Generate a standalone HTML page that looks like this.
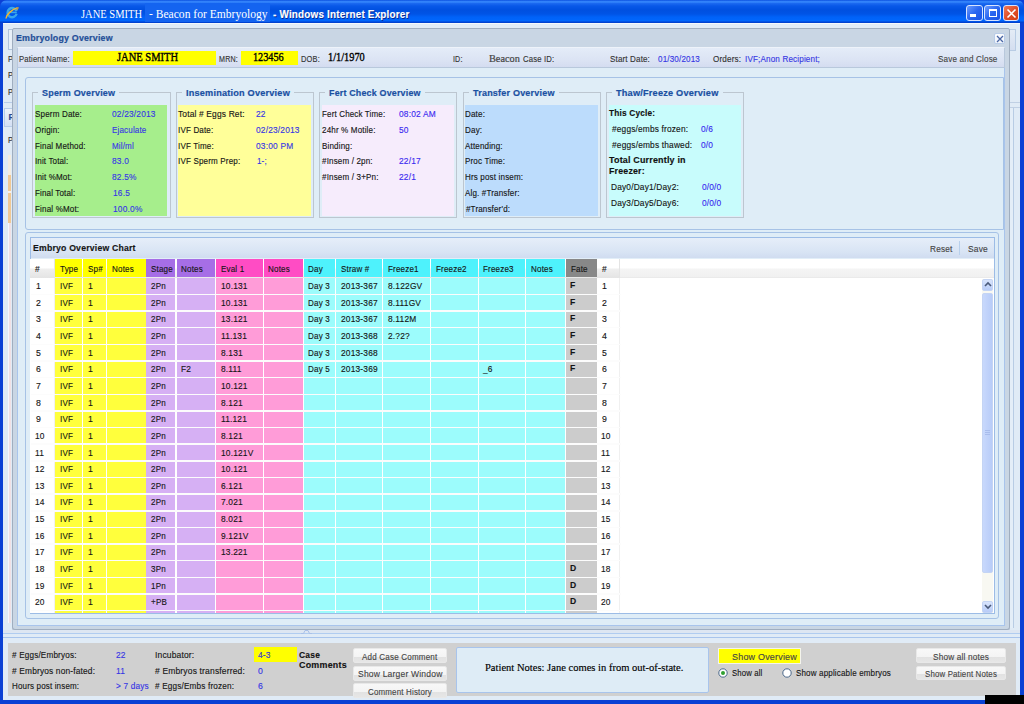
<!DOCTYPE html>
<html><head><meta charset="utf-8">
<style>
*{margin:0;padding:0;box-sizing:border-box}
html,body{width:1024px;height:704px;overflow:hidden;background:#0b3fd6;font-family:"Liberation Sans",sans-serif}
.a{position:absolute}
.t{position:absolute;white-space:nowrap;transform-origin:0 0;-webkit-text-stroke:0.14px currentColor}
</style></head><body>
<div class="a" style="left:0px;top:0px;width:1024px;height:23.5px;background:linear-gradient(#0a50e0 0,#3a8cff 1.8px,#1a68f0 3.5px,#0858e8 6px,#0050e0 10px,#0054e6 14px,#0062f8 17px,#0066fc 20.5px,#0044d4 22.3px,#0038c0 23.5px);border-radius:7px 7px 0 0"></div>
<div class="a" style="left:0px;top:23px;width:1024px;height:681px;background:#0a40d4"></div>
<div class="a" style="left:3px;top:23px;width:1017px;height:677px;background:#e0ebf6"></div>
<div class="a" style="left:3px;top:23px;width:1017px;height:1px;background:#f4f8fc"></div>
<div class="a" style="left:145px;top:3px;width:125px;height:19px;background:#1464f0"></div>
<svg class="a" style="left:4px;top:5px" width="16" height="15" viewBox="0 0 16 15"><path d="M12.6 8.8A4.6 4.6 0 1 1 12.5 6.2" fill="none" stroke="#38a6ec" stroke-width="2.4"/><path d="M5.3 7.4H12.8" stroke="#38a6ec" stroke-width="1.6"/><path d="M2 13.5C2.5 9 8 4.5 13.5 2.6" fill="none" stroke="#f2b630" stroke-width="1.5"/><path d="M13.5 2.6C15 2.3 13.5 4 12.8 5" fill="none" stroke="#e8a828" stroke-width="1.1"/></svg>
<div class="t" style="left:81.00px;top:8.45px;font:normal 12px/1 'Liberation Serif',serif;color:#fff;transform:scaleX(0.876);-webkit-text-stroke:0;">JANE SMITH</div>
<div class="t" style="left:149.00px;top:8.45px;font:normal 12px/1 'Liberation Serif',serif;color:#fff;transform:scaleX(0.964);-webkit-text-stroke:0;">- Beacon for Embryology</div>
<div class="t" style="left:273.00px;top:9.19px;font:bold 11px/1 'Liberation Sans',sans-serif;color:#fff;transform:scaleX(0.898);letter-spacing:0.225px;text-shadow:1px 1px 0 #0a2a90">- Windows Internet Explorer</div>
<div class="a" style="left:966.2px;top:5.3px;width:16.5px;height:15.8px;border:1px solid #d8e4ff;border-radius:3px;background:linear-gradient(135deg,#6c9cff,#2a66f0 50%,#1c54e4)"></div>
<div class="a" style="left:984.4px;top:5.3px;width:16.3px;height:15.8px;border:1px solid #d8e4ff;border-radius:3px;background:linear-gradient(135deg,#6c9cff,#2a66f0 50%,#1c54e4)"></div>
<div class="a" style="left:1003.3px;top:5.3px;width:15.8px;height:15.8px;border:1px solid #d8e4ff;border-radius:3px;background:linear-gradient(135deg,#f07a58,#e0502a 50%,#d43c10)"></div>
<div class="a" style="left:970px;top:14.3px;width:5.6px;height:2.3px;background:#fff"></div>
<div class="a" style="left:988.5px;top:9px;width:8.6px;height:8px;border:1px solid #fff;border-top-width:2.2px"></div>
<svg class="a" style="left:1006px;top:8px" width="11" height="11"><path d="M1.5 1.5L9.5 9.5M9.5 1.5L1.5 9.5" stroke="#fff" stroke-width="1.6"/></svg>
<div class="a" style="left:8px;top:28.5px;width:4px;height:21.5px;border:1px solid #b0c4dc;border-right:none;background:#e8f0f8"></div>
<div class="t" style="left:8.00px;top:54.55px;font:normal 8.8px/1 'Liberation Sans',sans-serif;color:#333;transform:scaleX(0.855);">P</div>
<div class="t" style="left:8.00px;top:71.05px;font:normal 8.8px/1 'Liberation Sans',sans-serif;color:#333;transform:scaleX(0.855);">P</div>
<div class="t" style="left:8.00px;top:87.55px;font:normal 8.8px/1 'Liberation Sans',sans-serif;color:#333;transform:scaleX(0.855);">P</div>
<div class="a" style="left:3.5px;top:102px;width:8px;height:1px;background:#b8cce8"></div>
<div class="a" style="left:3.5px;top:108px;width:8px;height:18.5px;border:1px solid #b8cce8;border-right:none;background:linear-gradient(#eef2fa,#d4e0f4)"></div>
<div class="t" style="left:8.50px;top:113.05px;font:bold 8.8px/1 'Liberation Sans',sans-serif;color:#2a4a90;transform:scaleX(1.000);">P</div>
<div class="t" style="left:8.00px;top:135.55px;font:normal 8.8px/1 'Liberation Sans',sans-serif;color:#333;transform:scaleX(0.855);">P</div>
<div class="a" style="left:8px;top:155px;width:3px;height:20px;background:#f4ece0"></div>
<div class="a" style="left:8px;top:175px;width:3px;height:16px;background:#f0c894"></div>
<div class="a" style="left:8px;top:191px;width:3px;height:2px;background:#f8f0e8"></div>
<div class="a" style="left:8px;top:193px;width:3px;height:30px;background:#f0c894"></div>
<div class="a" style="left:8px;top:223px;width:3px;height:400px;background:#f0e0e4"></div>
<div class="a" style="left:7.5px;top:223px;width:1px;height:400px;background:#f8f8fc"></div>
<div class="a" style="left:1010px;top:29px;width:5.5px;height:21.5px;border:1px solid #b8cce4;border-left:none;background:linear-gradient(#e4ecf6,#d4def0)"></div>
<div class="a" style="left:1009px;top:101.5px;width:11px;height:1px;background:#c0d0e4"></div>
<div class="a" style="left:1009px;top:106.5px;width:11px;height:1px;background:#c0d0e4"></div>
<div class="a" style="left:1010px;top:108px;width:4px;height:520px;border-right:1px solid #b8cce4;background:#e4eef8"></div>
<div class="a" style="left:11.5px;top:28px;width:998px;height:602px;background:#c9d6e4;border:1px solid #a0aec0;border-radius:2px 2px 3px 3px;box-shadow:0 1px 0 #b4c0d0"></div>
<div class="t" style="left:16.00px;top:32.84px;font:bold 9.4px/1 'Liberation Sans',sans-serif;color:#1f4f98;transform:scaleX(0.943);letter-spacing:0.217px;-webkit-text-stroke:0.2px currentColor">Embryology Overview</div>
<div class="a" style="left:993.5px;top:32.5px;width:11px;height:11px;background:linear-gradient(#fcfdff,#eef3fa);border:1px solid #b8cce8;border-radius:2px"></div>
<svg class="a" style="left:995.5px;top:34.5px" width="8" height="8"><path d="M1 1L7 7M7 1L1 7" stroke="#4a66a4" stroke-width="1.3"/></svg>
<div class="a" style="left:16.5px;top:47px;width:988px;height:21px;background:linear-gradient(#e4ecf8,#dce4f4 60%,#d4dcf0);border:1px solid #b8c8dc;border-top-color:#eef3fa"></div>
<div class="t" style="left:18.50px;top:54.20px;font:normal 9.8px/1 'Liberation Sans',sans-serif;color:#333;transform:scaleX(0.785);letter-spacing:0.199px;">Patient Name:</div>
<div class="a" style="left:73px;top:50.5px;width:143px;height:14.5px;background:#ffff00"></div>
<div class="t" style="left:117.00px;top:52.37px;font:normal 11.5px/1 'Liberation Serif',serif;color:#000;transform:scaleX(0.914);-webkit-text-stroke:0.35px #000">JANE SMITH</div>
<div class="t" style="left:219.00px;top:54.20px;font:normal 9.8px/1 'Liberation Sans',sans-serif;color:#333;transform:scaleX(0.728);letter-spacing:0.261px;">MRN:</div>
<div class="a" style="left:241px;top:50.5px;width:57px;height:14px;background:#ffff00"></div>
<div class="t" style="left:253.00px;top:51.87px;font:normal 11.5px/1 'Liberation Serif',serif;color:#000;transform:scaleX(0.891);-webkit-text-stroke:0.35px #000">123456</div>
<div class="t" style="left:300.50px;top:54.20px;font:normal 9.8px/1 'Liberation Sans',sans-serif;color:#333;transform:scaleX(0.761);letter-spacing:0.250px;">DOB:</div>
<div class="t" style="left:327.50px;top:51.87px;font:normal 11.5px/1 'Liberation Serif',serif;color:#000;transform:scaleX(0.899);-webkit-text-stroke:0.35px #000">1/1/1970</div>
<div class="t" style="left:452.50px;top:54.20px;font:normal 9.8px/1 'Liberation Sans',sans-serif;color:#333;transform:scaleX(0.728);letter-spacing:0.174px;">ID:</div>
<div class="t" style="left:489.40px;top:53.29px;font:normal 11px/1 'Liberation Serif',serif;color:#444;transform:scaleX(0.937);-webkit-text-stroke:0.2px #444">Beacon</div>
<div class="t" style="left:522.70px;top:54.20px;font:normal 9.8px/1 'Liberation Sans',sans-serif;color:#333;transform:scaleX(0.786);letter-spacing:0.199px;">Case ID:</div>
<div class="t" style="left:609.50px;top:54.20px;font:normal 9.8px/1 'Liberation Sans',sans-serif;color:#333;transform:scaleX(0.820);letter-spacing:0.177px;">Start Date:</div>
<div class="t" style="left:657.50px;top:54.20px;font:normal 9.8px/1 'Liberation Sans',sans-serif;color:#3636e4;transform:scaleX(0.822);letter-spacing:0.204px;">01/30/2013</div>
<div class="t" style="left:713.00px;top:54.20px;font:normal 9.8px/1 'Liberation Sans',sans-serif;color:#333;transform:scaleX(0.830);letter-spacing:0.194px;">Orders:</div>
<div class="t" style="left:744.50px;top:54.20px;font:normal 9.8px/1 'Liberation Sans',sans-serif;color:#3636e4;transform:scaleX(0.826);letter-spacing:0.191px;">IVF;Anon Recipient;</div>
<div class="t" style="left:937.50px;top:54.20px;font:normal 9.8px/1 'Liberation Sans',sans-serif;color:#444;transform:scaleX(0.826);letter-spacing:0.206px;">Save and Close</div>
<div class="a" style="left:16.5px;top:68px;width:988px;height:557.5px;background:#dfedf7;border:1px solid #a8c4ec;border-top:none"></div>
<div class="a" style="left:24.5px;top:77px;width:979.5px;height:153px;border:1px solid #a6c2e6;background:#dfedf7;border-radius:3px 0 0 3px"></div>
<div class="a" style="left:32px;top:92px;width:138.5px;height:126px;border:1px solid #bcc6d0"></div>
<div class="a" style="left:38px;top:86px;width:81.3px;height:12px;background:#dfedf7"></div>
<div class="t" style="left:42.00px;top:87.87px;font:bold 9.6px/1 'Liberation Sans',sans-serif;color:#1a50a2;transform:scaleX(0.935);letter-spacing:0.224px;-webkit-text-stroke:0.2px currentColor">Sperm Overview</div>
<div class="a" style="left:35px;top:105px;width:132px;height:110.5px;background:#a6ee8c"></div>
<div class="a" style="left:175.5px;top:92px;width:138.0px;height:126px;border:1px solid #bcc6d0"></div>
<div class="a" style="left:181.6px;top:86px;width:112px;height:12px;background:#dfedf7"></div>
<div class="t" style="left:185.60px;top:87.87px;font:bold 9.6px/1 'Liberation Sans',sans-serif;color:#1a50a2;transform:scaleX(0.955);letter-spacing:0.207px;-webkit-text-stroke:0.2px currentColor">Insemination Overview</div>
<div class="a" style="left:178px;top:105px;width:132.60000000000002px;height:110.5px;background:#ffff99"></div>
<div class="a" style="left:319px;top:92px;width:137.5px;height:126px;border:1px solid #bcc6d0"></div>
<div class="a" style="left:324.9px;top:86px;width:99.7px;height:12px;background:#dfedf7"></div>
<div class="t" style="left:328.90px;top:87.87px;font:bold 9.6px/1 'Liberation Sans',sans-serif;color:#1a50a2;transform:scaleX(0.927);letter-spacing:0.208px;-webkit-text-stroke:0.2px currentColor">Fert Check Overview</div>
<div class="a" style="left:321.7px;top:105px;width:132.3px;height:110.5px;background:#f6ecfc"></div>
<div class="a" style="left:462.5px;top:92px;width:138.5px;height:126px;border:1px solid #bcc6d0"></div>
<div class="a" style="left:469px;top:86px;width:89.7px;height:12px;background:#dfedf7"></div>
<div class="t" style="left:473.00px;top:87.87px;font:bold 9.6px/1 'Liberation Sans',sans-serif;color:#1a50a2;transform:scaleX(0.942);letter-spacing:0.204px;-webkit-text-stroke:0.2px currentColor">Transfer Overview</div>
<div class="a" style="left:464.8px;top:105px;width:132.90000000000003px;height:110.5px;background:#bcdcfc"></div>
<div class="a" style="left:605.7px;top:92px;width:137.89999999999998px;height:126px;border:1px solid #bcc6d0"></div>
<div class="a" style="left:612.2px;top:86px;width:110.5px;height:12px;background:#dfedf7"></div>
<div class="t" style="left:616.20px;top:87.87px;font:bold 9.6px/1 'Liberation Sans',sans-serif;color:#1a50a2;transform:scaleX(0.956);letter-spacing:0.215px;-webkit-text-stroke:0.2px currentColor">Thaw/Freeze Overview</div>
<div class="a" style="left:608.6px;top:105px;width:132.39999999999998px;height:110.5px;background:#c8fcfc"></div>
<div class="t" style="left:35.00px;top:109.10px;font:normal 9.8px/1 'Liberation Sans',sans-serif;color:#151515;transform:scaleX(0.821);letter-spacing:0.208px;">Sperm Date:</div>
<div class="t" style="left:111.80px;top:109.10px;font:normal 9.8px/1 'Liberation Sans',sans-serif;color:#3636e4;transform:scaleX(0.854);letter-spacing:0.204px;">02/23/2013</div>
<div class="t" style="left:35.00px;top:124.88px;font:normal 9.8px/1 'Liberation Sans',sans-serif;color:#151515;transform:scaleX(0.821);letter-spacing:0.172px;">Origin:</div>
<div class="t" style="left:111.80px;top:124.88px;font:normal 9.8px/1 'Liberation Sans',sans-serif;color:#3636e4;transform:scaleX(0.821);letter-spacing:0.187px;">Ejaculate</div>
<div class="t" style="left:35.00px;top:140.66px;font:normal 9.8px/1 'Liberation Sans',sans-serif;color:#151515;transform:scaleX(0.821);letter-spacing:0.190px;">Final Method:</div>
<div class="t" style="left:111.80px;top:140.66px;font:normal 9.8px/1 'Liberation Sans',sans-serif;color:#3636e4;transform:scaleX(0.821);letter-spacing:0.178px;">Mil/ml</div>
<div class="t" style="left:35.00px;top:156.44px;font:normal 9.8px/1 'Liberation Sans',sans-serif;color:#151515;transform:scaleX(0.821);letter-spacing:0.148px;">Init Total:</div>
<div class="t" style="left:111.80px;top:156.44px;font:normal 9.8px/1 'Liberation Sans',sans-serif;color:#3636e4;transform:scaleX(0.854);letter-spacing:0.199px;">83.0</div>
<div class="t" style="left:35.00px;top:172.22px;font:normal 9.8px/1 'Liberation Sans',sans-serif;color:#151515;transform:scaleX(0.821);letter-spacing:0.182px;">Init %Mot:</div>
<div class="t" style="left:111.80px;top:172.22px;font:normal 9.8px/1 'Liberation Sans',sans-serif;color:#3636e4;transform:scaleX(0.854);letter-spacing:0.232px;">82.5%</div>
<div class="t" style="left:35.00px;top:188.00px;font:normal 9.8px/1 'Liberation Sans',sans-serif;color:#151515;transform:scaleX(0.821);letter-spacing:0.164px;">Final Total:</div>
<div class="t" style="left:113.20px;top:188.00px;font:normal 9.8px/1 'Liberation Sans',sans-serif;color:#3636e4;transform:scaleX(0.854);letter-spacing:0.199px;">16.5</div>
<div class="t" style="left:35.00px;top:203.78px;font:normal 9.8px/1 'Liberation Sans',sans-serif;color:#151515;transform:scaleX(0.821);letter-spacing:0.196px;">Final %Mot:</div>
<div class="t" style="left:113.20px;top:203.78px;font:normal 9.8px/1 'Liberation Sans',sans-serif;color:#3636e4;transform:scaleX(0.854);letter-spacing:0.231px;">100.0%</div>
<div class="t" style="left:178.00px;top:109.10px;font:normal 9.8px/1 'Liberation Sans',sans-serif;color:#151515;transform:scaleX(0.858);letter-spacing:0.183px;">Total # Eggs Ret:</div>
<div class="t" style="left:256.00px;top:109.10px;font:normal 9.8px/1 'Liberation Sans',sans-serif;color:#3636e4;transform:scaleX(0.854);letter-spacing:0.227px;">22</div>
<div class="t" style="left:178.00px;top:124.88px;font:normal 9.8px/1 'Liberation Sans',sans-serif;color:#151515;transform:scaleX(0.821);letter-spacing:0.192px;">IVF Date:</div>
<div class="t" style="left:256.00px;top:124.88px;font:normal 9.8px/1 'Liberation Sans',sans-serif;color:#3636e4;transform:scaleX(0.854);letter-spacing:0.204px;">02/23/2013</div>
<div class="t" style="left:178.00px;top:140.66px;font:normal 9.8px/1 'Liberation Sans',sans-serif;color:#151515;transform:scaleX(0.821);letter-spacing:0.194px;">IVF Time:</div>
<div class="t" style="left:256.00px;top:140.66px;font:normal 9.8px/1 'Liberation Sans',sans-serif;color:#3636e4;transform:scaleX(0.854);letter-spacing:0.218px;">03:00 PM</div>
<div class="t" style="left:178.00px;top:156.44px;font:normal 9.8px/1 'Liberation Sans',sans-serif;color:#151515;transform:scaleX(0.821);letter-spacing:0.203px;">IVF Sperm Prep:</div>
<div class="t" style="left:256.70px;top:156.44px;font:normal 9.8px/1 'Liberation Sans',sans-serif;color:#3636e4;transform:scaleX(0.821);letter-spacing:0.159px;">1-;</div>
<div class="t" style="left:321.70px;top:109.10px;font:normal 9.8px/1 'Liberation Sans',sans-serif;color:#151515;transform:scaleX(0.815);letter-spacing:0.194px;">Fert Check Time:</div>
<div class="t" style="left:399.00px;top:109.10px;font:normal 9.8px/1 'Liberation Sans',sans-serif;color:#3a2af0;transform:scaleX(0.854);letter-spacing:0.216px;">08:02 AM</div>
<div class="t" style="left:321.70px;top:124.88px;font:normal 9.8px/1 'Liberation Sans',sans-serif;color:#151515;transform:scaleX(0.821);letter-spacing:0.186px;">24hr % Motile:</div>
<div class="t" style="left:399.00px;top:124.88px;font:normal 9.8px/1 'Liberation Sans',sans-serif;color:#3a2af0;transform:scaleX(0.854);letter-spacing:0.227px;">50</div>
<div class="t" style="left:321.70px;top:140.66px;font:normal 9.8px/1 'Liberation Sans',sans-serif;color:#151515;transform:scaleX(0.821);letter-spacing:0.184px;">Binding:</div>
<div class="t" style="left:321.70px;top:156.44px;font:normal 9.8px/1 'Liberation Sans',sans-serif;color:#151515;transform:scaleX(0.821);letter-spacing:0.190px;">#Insem / 2pn:</div>
<div class="t" style="left:399.00px;top:156.44px;font:normal 9.8px/1 'Liberation Sans',sans-serif;color:#3a2af0;transform:scaleX(0.854);letter-spacing:0.204px;">22/17</div>
<div class="t" style="left:321.70px;top:172.22px;font:normal 9.8px/1 'Liberation Sans',sans-serif;color:#151515;transform:scaleX(0.821);letter-spacing:0.197px;">#Insem / 3+Pn:</div>
<div class="t" style="left:399.00px;top:172.22px;font:normal 9.8px/1 'Liberation Sans',sans-serif;color:#3a2af0;transform:scaleX(0.854);letter-spacing:0.199px;">22/1</div>
<div class="t" style="left:464.80px;top:109.10px;font:normal 9.8px/1 'Liberation Sans',sans-serif;color:#151515;transform:scaleX(0.821);letter-spacing:0.195px;">Date:</div>
<div class="t" style="left:464.80px;top:124.88px;font:normal 9.8px/1 'Liberation Sans',sans-serif;color:#151515;transform:scaleX(0.821);letter-spacing:0.210px;">Day:</div>
<div class="t" style="left:464.80px;top:140.66px;font:normal 9.8px/1 'Liberation Sans',sans-serif;color:#151515;transform:scaleX(0.821);letter-spacing:0.184px;">Attending:</div>
<div class="t" style="left:464.80px;top:156.44px;font:normal 9.8px/1 'Liberation Sans',sans-serif;color:#151515;transform:scaleX(0.821);letter-spacing:0.195px;">Proc Time:</div>
<div class="t" style="left:464.80px;top:172.22px;font:normal 9.8px/1 'Liberation Sans',sans-serif;color:#151515;transform:scaleX(0.821);letter-spacing:0.189px;">Hrs post insem:</div>
<div class="t" style="left:464.80px;top:188.00px;font:normal 9.8px/1 'Liberation Sans',sans-serif;color:#151515;transform:scaleX(0.821);letter-spacing:0.178px;">Alg. #Transfer:</div>
<div class="t" style="left:466.00px;top:203.78px;font:normal 9.8px/1 'Liberation Sans',sans-serif;color:#151515;transform:scaleX(0.821);letter-spacing:0.179px;">#Transfer'd:</div>
<div class="t" style="left:609.20px;top:108.81px;font:bold 9.2px/1 'Liberation Sans',sans-serif;color:#111;transform:scaleX(0.904);letter-spacing:0.186px;">This Cycle:</div>
<div class="t" style="left:611.50px;top:124.20px;font:normal 9.8px/1 'Liberation Sans',sans-serif;color:#151515;transform:scaleX(0.850);letter-spacing:0.199px;">#eggs/embs frozen:</div>
<div class="t" style="left:701.40px;top:124.20px;font:normal 9.8px/1 'Liberation Sans',sans-serif;color:#3a2af0;transform:scaleX(0.854);letter-spacing:0.189px;">0/6</div>
<div class="t" style="left:611.50px;top:139.90px;font:normal 9.8px/1 'Liberation Sans',sans-serif;color:#151515;transform:scaleX(0.852);letter-spacing:0.209px;">#eggs/embs thawed:</div>
<div class="t" style="left:701.40px;top:139.90px;font:normal 9.8px/1 'Liberation Sans',sans-serif;color:#3a2af0;transform:scaleX(0.854);letter-spacing:0.189px;">0/0</div>
<div class="t" style="left:609.20px;top:156.41px;font:bold 9.2px/1 'Liberation Sans',sans-serif;color:#111;transform:scaleX(0.977);letter-spacing:0.175px;">Total Currently in</div>
<div class="t" style="left:609.20px;top:166.81px;font:bold 9.2px/1 'Liberation Sans',sans-serif;color:#111;transform:scaleX(0.963);letter-spacing:0.186px;">Freezer:</div>
<div class="t" style="left:611.00px;top:182.20px;font:normal 9.8px/1 'Liberation Sans',sans-serif;color:#151515;transform:scaleX(0.850);letter-spacing:0.213px;">Day0/Day1/Day2:</div>
<div class="t" style="left:701.50px;top:182.20px;font:normal 9.8px/1 'Liberation Sans',sans-serif;color:#3a2af0;transform:scaleX(0.854);letter-spacing:0.182px;">0/0/0</div>
<div class="t" style="left:611.00px;top:197.70px;font:normal 9.8px/1 'Liberation Sans',sans-serif;color:#151515;transform:scaleX(0.850);letter-spacing:0.213px;">Day3/Day5/Day6:</div>
<div class="t" style="left:701.50px;top:197.70px;font:normal 9.8px/1 'Liberation Sans',sans-serif;color:#3a2af0;transform:scaleX(0.854);letter-spacing:0.182px;">0/0/0</div>
<div class="a" style="left:25px;top:231.5px;width:974px;height:387px;border:1px solid #a6c2e6;border-radius:3px"></div>
<div class="a" style="left:29.5px;top:236.5px;width:965px;height:377.5px;border:1px solid #9cbce6;background:#e2eef8"></div>
<div class="a" style="left:30.5px;top:237.5px;width:963px;height:20px;background:linear-gradient(#e6eef9,#d8e4f4 70%,#d0dcf0)"></div>
<div class="t" style="left:33.40px;top:244.21px;font:bold 9.2px/1 'Liberation Sans',sans-serif;color:#151515;transform:scaleX(0.946);letter-spacing:0.207px;">Embryo Overview Chart</div>
<div class="t" style="left:929.50px;top:243.70px;font:normal 9.8px/1 'Liberation Sans',sans-serif;color:#444;transform:scaleX(0.844);letter-spacing:0.213px;">Reset</div>
<div class="a" style="left:959px;top:241px;width:1px;height:14px;background:#b8d0ec"></div>
<div class="t" style="left:967.50px;top:243.70px;font:normal 9.8px/1 'Liberation Sans',sans-serif;color:#444;transform:scaleX(0.860);letter-spacing:0.233px;">Save</div>
<div class="a" style="left:30.5px;top:258.5px;width:963.5px;height:354.5px;background:#fff"></div>
<div class="a" style="left:30.5px;top:258.5px;width:963.5px;height:19px;background:linear-gradient(#fff 0,#fff 45%,#f4f4f4 55%,#f0f0f0 95%,#e4e4e4)"></div>
<div class="a" style="left:30.25px;top:258.5px;width:24.25px;height:19px;border-right:1px solid #e4e4e4;background:linear-gradient(#fff 0,#fff 45%,#eee 55%,#e4e4e4)"></div>
<div class="t" style="left:34.75px;top:263.50px;font:normal 9.8px/1 'Liberation Sans',sans-serif;color:#151515;transform:scaleX(0.855);">#</div>
<div class="a" style="left:55.0px;top:259.4px;width:27.0px;height:17.9px;background:#ffff00"></div>
<div class="t" style="left:59.75px;top:263.50px;font:normal 9.8px/1 'Liberation Sans',sans-serif;color:#151515;transform:scaleX(0.821);letter-spacing:0.221px;">Type</div>
<div class="a" style="left:82.75px;top:259.4px;width:23.0px;height:17.9px;background:#ffff00"></div>
<div class="t" style="left:87.50px;top:263.50px;font:normal 9.8px/1 'Liberation Sans',sans-serif;color:#151515;transform:scaleX(0.821);letter-spacing:0.242px;">Sp#</div>
<div class="a" style="left:106.75px;top:259.4px;width:39.0px;height:17.9px;background:#ffff00"></div>
<div class="t" style="left:111.50px;top:263.50px;font:normal 9.8px/1 'Liberation Sans',sans-serif;color:#151515;transform:scaleX(0.821);letter-spacing:0.213px;">Notes</div>
<div class="a" style="left:146.25px;top:259.4px;width:29.0px;height:17.9px;background:#a66ee6"></div>
<div class="t" style="left:151.00px;top:263.50px;font:normal 9.8px/1 'Liberation Sans',sans-serif;color:#151515;transform:scaleX(0.821);letter-spacing:0.213px;">Stage</div>
<div class="a" style="left:176.5px;top:259.4px;width:38.75px;height:17.9px;background:#a66ee6"></div>
<div class="t" style="left:181.25px;top:263.50px;font:normal 9.8px/1 'Liberation Sans',sans-serif;color:#151515;transform:scaleX(0.821);letter-spacing:0.213px;">Notes</div>
<div class="a" style="left:216.0px;top:259.4px;width:46.75px;height:17.9px;background:#ff4cc4"></div>
<div class="t" style="left:220.75px;top:263.50px;font:normal 9.8px/1 'Liberation Sans',sans-serif;color:#151515;transform:scaleX(0.821);letter-spacing:0.189px;">Eval 1</div>
<div class="a" style="left:263.5px;top:259.4px;width:39.25px;height:17.9px;background:#ff4cc4"></div>
<div class="t" style="left:268.25px;top:263.50px;font:normal 9.8px/1 'Liberation Sans',sans-serif;color:#151515;transform:scaleX(0.821);letter-spacing:0.213px;">Notes</div>
<div class="a" style="left:303.5px;top:259.4px;width:31.25px;height:17.9px;background:#4ef2fc"></div>
<div class="t" style="left:308.25px;top:263.50px;font:normal 9.8px/1 'Liberation Sans',sans-serif;color:#151515;transform:scaleX(0.821);letter-spacing:0.242px;">Day</div>
<div class="a" style="left:336.0px;top:259.4px;width:46.25px;height:17.9px;background:#4ef2fc"></div>
<div class="t" style="left:340.75px;top:263.50px;font:normal 9.8px/1 'Liberation Sans',sans-serif;color:#151515;transform:scaleX(0.821);letter-spacing:0.198px;">Straw #</div>
<div class="a" style="left:383.25px;top:259.4px;width:46.5px;height:17.9px;background:#4ef2fc"></div>
<div class="t" style="left:388.00px;top:263.50px;font:normal 9.8px/1 'Liberation Sans',sans-serif;color:#151515;transform:scaleX(0.821);letter-spacing:0.214px;">Freeze1</div>
<div class="a" style="left:431.0px;top:259.4px;width:46.75px;height:17.9px;background:#4ef2fc"></div>
<div class="t" style="left:435.75px;top:263.50px;font:normal 9.8px/1 'Liberation Sans',sans-serif;color:#151515;transform:scaleX(0.821);letter-spacing:0.214px;">Freeze2</div>
<div class="a" style="left:478.5px;top:259.4px;width:46.75px;height:17.9px;background:#4ef2fc"></div>
<div class="t" style="left:483.25px;top:263.50px;font:normal 9.8px/1 'Liberation Sans',sans-serif;color:#151515;transform:scaleX(0.821);letter-spacing:0.214px;">Freeze3</div>
<div class="a" style="left:526.0px;top:259.4px;width:38.75px;height:17.9px;background:#4ef2fc"></div>
<div class="t" style="left:530.75px;top:263.50px;font:normal 9.8px/1 'Liberation Sans',sans-serif;color:#151515;transform:scaleX(0.821);letter-spacing:0.213px;">Notes</div>
<div class="a" style="left:566.0px;top:259.4px;width:30.5px;height:17.9px;background:#888888"></div>
<div class="t" style="left:570.75px;top:263.50px;font:normal 9.8px/1 'Liberation Sans',sans-serif;color:#151515;transform:scaleX(0.821);letter-spacing:0.204px;">Fate</div>
<div class="a" style="left:597px;top:258.5px;width:23px;height:19px;border-right:1px solid #e4e4e4;background:linear-gradient(#fff 0,#fff 45%,#eee 55%,#e4e4e4)"></div>
<div class="t" style="left:601.50px;top:263.50px;font:normal 9.8px/1 'Liberation Sans',sans-serif;color:#151515;transform:scaleX(0.855);">#</div>
<div class="a" style="left:30.25px;top:278.25px;width:24.25px;height:334.5px;background:#fff;border-right:1px solid #f0f0f0"></div>
<div class="a" style="left:55.0px;top:278.25px;width:27.0px;height:334.5px;background:#ffff3c"></div>
<div class="a" style="left:82.75px;top:278.25px;width:23.0px;height:334.5px;background:#ffff3c"></div>
<div class="a" style="left:106.75px;top:278.25px;width:39.0px;height:334.5px;background:#ffff3c"></div>
<div class="a" style="left:146.25px;top:278.25px;width:29.0px;height:334.5px;background:#d6b0f4"></div>
<div class="a" style="left:176.5px;top:278.25px;width:38.75px;height:334.5px;background:#d6b0f4"></div>
<div class="a" style="left:216.0px;top:278.25px;width:46.75px;height:334.5px;background:#ff9cd8"></div>
<div class="a" style="left:263.5px;top:278.25px;width:39.25px;height:334.5px;background:#ff9cd8"></div>
<div class="a" style="left:303.5px;top:278.25px;width:31.25px;height:334.5px;background:#9cfcfc"></div>
<div class="a" style="left:336.0px;top:278.25px;width:46.25px;height:334.5px;background:#9cfcfc"></div>
<div class="a" style="left:383.25px;top:278.25px;width:46.5px;height:334.5px;background:#9cfcfc"></div>
<div class="a" style="left:431.0px;top:278.25px;width:46.75px;height:334.5px;background:#9cfcfc"></div>
<div class="a" style="left:478.5px;top:278.25px;width:46.75px;height:334.5px;background:#9cfcfc"></div>
<div class="a" style="left:526.0px;top:278.25px;width:38.75px;height:334.5px;background:#9cfcfc"></div>
<div class="a" style="left:566.0px;top:278.25px;width:30.5px;height:334.5px;background:#cccccc"></div>
<div class="a" style="left:597px;top:278.25px;width:23px;height:334.5px;background:#fff;border-right:1px solid #f0f0f0"></div>
<div class="a" style="left:30.5px;top:293.645px;width:590px;height:1.5px;background:#fcfcfc"></div>
<div class="a" style="left:30.5px;top:310.29px;width:590px;height:1.5px;background:#fcfcfc"></div>
<div class="a" style="left:30.5px;top:326.935px;width:590px;height:1.5px;background:#fcfcfc"></div>
<div class="a" style="left:30.5px;top:343.58px;width:590px;height:1.5px;background:#fcfcfc"></div>
<div class="a" style="left:30.5px;top:360.225px;width:590px;height:1.5px;background:#fcfcfc"></div>
<div class="a" style="left:30.5px;top:376.87px;width:590px;height:1.5px;background:#fcfcfc"></div>
<div class="a" style="left:30.5px;top:393.515px;width:590px;height:1.5px;background:#fcfcfc"></div>
<div class="a" style="left:30.5px;top:410.15999999999997px;width:590px;height:1.5px;background:#fcfcfc"></div>
<div class="a" style="left:30.5px;top:426.805px;width:590px;height:1.5px;background:#fcfcfc"></div>
<div class="a" style="left:30.5px;top:443.45px;width:590px;height:1.5px;background:#fcfcfc"></div>
<div class="a" style="left:30.5px;top:460.095px;width:590px;height:1.5px;background:#fcfcfc"></div>
<div class="a" style="left:30.5px;top:476.74px;width:590px;height:1.5px;background:#fcfcfc"></div>
<div class="a" style="left:30.5px;top:493.385px;width:590px;height:1.5px;background:#fcfcfc"></div>
<div class="a" style="left:30.5px;top:510.03px;width:590px;height:1.5px;background:#fcfcfc"></div>
<div class="a" style="left:30.5px;top:526.675px;width:590px;height:1.5px;background:#fcfcfc"></div>
<div class="a" style="left:30.5px;top:543.3199999999999px;width:590px;height:1.5px;background:#fcfcfc"></div>
<div class="a" style="left:30.5px;top:559.9649999999999px;width:590px;height:1.5px;background:#fcfcfc"></div>
<div class="a" style="left:30.5px;top:576.61px;width:590px;height:1.5px;background:#fcfcfc"></div>
<div class="a" style="left:30.5px;top:593.255px;width:590px;height:1.5px;background:#fcfcfc"></div>
<div class="a" style="left:30.5px;top:609.9px;width:590px;height:1.5px;background:#fcfcfc"></div>
<div class="t" style="left:36.00px;top:281.10px;font:normal 9.8px/1 'Liberation Sans',sans-serif;color:#151515;transform:scaleX(0.890);">1</div>
<div class="t" style="left:602.00px;top:281.10px;font:normal 9.8px/1 'Liberation Sans',sans-serif;color:#151515;transform:scaleX(0.890);">1</div>
<div class="t" style="left:59.75px;top:281.10px;font:normal 9.8px/1 'Liberation Sans',sans-serif;color:#151515;transform:scaleX(0.821);letter-spacing:0.212px;">IVF</div>
<div class="t" style="left:87.50px;top:281.10px;font:normal 9.8px/1 'Liberation Sans',sans-serif;color:#151515;transform:scaleX(0.890);">1</div>
<div class="t" style="left:151.00px;top:281.10px;font:normal 9.8px/1 'Liberation Sans',sans-serif;color:#151515;transform:scaleX(0.821);letter-spacing:0.242px;">2Pn</div>
<div class="t" style="left:220.75px;top:281.10px;font:normal 9.8px/1 'Liberation Sans',sans-serif;color:#151515;transform:scaleX(0.854);letter-spacing:0.208px;">10.131</div>
<div class="t" style="left:308.25px;top:281.10px;font:normal 9.8px/1 'Liberation Sans',sans-serif;color:#151515;transform:scaleX(0.821);letter-spacing:0.213px;">Day 3</div>
<div class="t" style="left:340.75px;top:281.10px;font:normal 9.8px/1 'Liberation Sans',sans-serif;color:#151515;transform:scaleX(0.854);letter-spacing:0.216px;">2013-367</div>
<div class="t" style="left:388.00px;top:281.10px;font:normal 9.8px/1 'Liberation Sans',sans-serif;color:#151515;transform:scaleX(0.854);letter-spacing:0.230px;">8.122GV</div>
<div class="t" style="left:570.25px;top:280.98px;font:bold 9px/1 'Liberation Sans',sans-serif;color:#151515;transform:scaleX(0.950);">F</div>
<div class="t" style="left:36.00px;top:297.75px;font:normal 9.8px/1 'Liberation Sans',sans-serif;color:#151515;transform:scaleX(0.890);">2</div>
<div class="t" style="left:602.00px;top:297.75px;font:normal 9.8px/1 'Liberation Sans',sans-serif;color:#151515;transform:scaleX(0.890);">2</div>
<div class="t" style="left:59.75px;top:297.75px;font:normal 9.8px/1 'Liberation Sans',sans-serif;color:#151515;transform:scaleX(0.821);letter-spacing:0.212px;">IVF</div>
<div class="t" style="left:87.50px;top:297.75px;font:normal 9.8px/1 'Liberation Sans',sans-serif;color:#151515;transform:scaleX(0.890);">1</div>
<div class="t" style="left:151.00px;top:297.75px;font:normal 9.8px/1 'Liberation Sans',sans-serif;color:#151515;transform:scaleX(0.821);letter-spacing:0.242px;">2Pn</div>
<div class="t" style="left:220.75px;top:297.75px;font:normal 9.8px/1 'Liberation Sans',sans-serif;color:#151515;transform:scaleX(0.854);letter-spacing:0.208px;">10.131</div>
<div class="t" style="left:308.25px;top:297.75px;font:normal 9.8px/1 'Liberation Sans',sans-serif;color:#151515;transform:scaleX(0.821);letter-spacing:0.213px;">Day 3</div>
<div class="t" style="left:340.75px;top:297.75px;font:normal 9.8px/1 'Liberation Sans',sans-serif;color:#151515;transform:scaleX(0.854);letter-spacing:0.216px;">2013-367</div>
<div class="t" style="left:388.00px;top:297.75px;font:normal 9.8px/1 'Liberation Sans',sans-serif;color:#151515;transform:scaleX(0.854);letter-spacing:0.222px;">8.111GV</div>
<div class="t" style="left:570.25px;top:297.63px;font:bold 9px/1 'Liberation Sans',sans-serif;color:#151515;transform:scaleX(0.950);">F</div>
<div class="t" style="left:36.00px;top:314.39px;font:normal 9.8px/1 'Liberation Sans',sans-serif;color:#151515;transform:scaleX(0.890);">3</div>
<div class="t" style="left:602.00px;top:314.39px;font:normal 9.8px/1 'Liberation Sans',sans-serif;color:#151515;transform:scaleX(0.890);">3</div>
<div class="t" style="left:59.75px;top:314.39px;font:normal 9.8px/1 'Liberation Sans',sans-serif;color:#151515;transform:scaleX(0.821);letter-spacing:0.212px;">IVF</div>
<div class="t" style="left:87.50px;top:314.39px;font:normal 9.8px/1 'Liberation Sans',sans-serif;color:#151515;transform:scaleX(0.890);">1</div>
<div class="t" style="left:151.00px;top:314.39px;font:normal 9.8px/1 'Liberation Sans',sans-serif;color:#151515;transform:scaleX(0.821);letter-spacing:0.242px;">2Pn</div>
<div class="t" style="left:220.75px;top:314.39px;font:normal 9.8px/1 'Liberation Sans',sans-serif;color:#151515;transform:scaleX(0.854);letter-spacing:0.208px;">13.121</div>
<div class="t" style="left:308.25px;top:314.39px;font:normal 9.8px/1 'Liberation Sans',sans-serif;color:#151515;transform:scaleX(0.821);letter-spacing:0.213px;">Day 3</div>
<div class="t" style="left:340.75px;top:314.39px;font:normal 9.8px/1 'Liberation Sans',sans-serif;color:#151515;transform:scaleX(0.854);letter-spacing:0.216px;">2013-367</div>
<div class="t" style="left:388.00px;top:314.39px;font:normal 9.8px/1 'Liberation Sans',sans-serif;color:#151515;transform:scaleX(0.854);letter-spacing:0.222px;">8.112M</div>
<div class="t" style="left:570.25px;top:314.27px;font:bold 9px/1 'Liberation Sans',sans-serif;color:#151515;transform:scaleX(0.950);">F</div>
<div class="t" style="left:36.00px;top:331.04px;font:normal 9.8px/1 'Liberation Sans',sans-serif;color:#151515;transform:scaleX(0.890);">4</div>
<div class="t" style="left:602.00px;top:331.04px;font:normal 9.8px/1 'Liberation Sans',sans-serif;color:#151515;transform:scaleX(0.890);">4</div>
<div class="t" style="left:59.75px;top:331.04px;font:normal 9.8px/1 'Liberation Sans',sans-serif;color:#151515;transform:scaleX(0.821);letter-spacing:0.212px;">IVF</div>
<div class="t" style="left:87.50px;top:331.04px;font:normal 9.8px/1 'Liberation Sans',sans-serif;color:#151515;transform:scaleX(0.890);">1</div>
<div class="t" style="left:151.00px;top:331.04px;font:normal 9.8px/1 'Liberation Sans',sans-serif;color:#151515;transform:scaleX(0.821);letter-spacing:0.242px;">2Pn</div>
<div class="t" style="left:220.75px;top:331.04px;font:normal 9.8px/1 'Liberation Sans',sans-serif;color:#151515;transform:scaleX(0.854);letter-spacing:0.203px;">11.131</div>
<div class="t" style="left:308.25px;top:331.04px;font:normal 9.8px/1 'Liberation Sans',sans-serif;color:#151515;transform:scaleX(0.821);letter-spacing:0.213px;">Day 3</div>
<div class="t" style="left:340.75px;top:331.04px;font:normal 9.8px/1 'Liberation Sans',sans-serif;color:#151515;transform:scaleX(0.854);letter-spacing:0.216px;">2013-368</div>
<div class="t" style="left:388.00px;top:331.04px;font:normal 9.8px/1 'Liberation Sans',sans-serif;color:#151515;transform:scaleX(0.854);letter-spacing:0.204px;">2.?2?</div>
<div class="t" style="left:570.25px;top:330.92px;font:bold 9px/1 'Liberation Sans',sans-serif;color:#151515;transform:scaleX(0.950);">F</div>
<div class="t" style="left:36.00px;top:347.68px;font:normal 9.8px/1 'Liberation Sans',sans-serif;color:#151515;transform:scaleX(0.890);">5</div>
<div class="t" style="left:602.00px;top:347.68px;font:normal 9.8px/1 'Liberation Sans',sans-serif;color:#151515;transform:scaleX(0.890);">5</div>
<div class="t" style="left:59.75px;top:347.68px;font:normal 9.8px/1 'Liberation Sans',sans-serif;color:#151515;transform:scaleX(0.821);letter-spacing:0.212px;">IVF</div>
<div class="t" style="left:87.50px;top:347.68px;font:normal 9.8px/1 'Liberation Sans',sans-serif;color:#151515;transform:scaleX(0.890);">1</div>
<div class="t" style="left:151.00px;top:347.68px;font:normal 9.8px/1 'Liberation Sans',sans-serif;color:#151515;transform:scaleX(0.821);letter-spacing:0.242px;">2Pn</div>
<div class="t" style="left:220.75px;top:347.68px;font:normal 9.8px/1 'Liberation Sans',sans-serif;color:#151515;transform:scaleX(0.854);letter-spacing:0.204px;">8.131</div>
<div class="t" style="left:308.25px;top:347.68px;font:normal 9.8px/1 'Liberation Sans',sans-serif;color:#151515;transform:scaleX(0.821);letter-spacing:0.213px;">Day 3</div>
<div class="t" style="left:340.75px;top:347.68px;font:normal 9.8px/1 'Liberation Sans',sans-serif;color:#151515;transform:scaleX(0.854);letter-spacing:0.216px;">2013-368</div>
<div class="t" style="left:570.25px;top:347.56px;font:bold 9px/1 'Liberation Sans',sans-serif;color:#151515;transform:scaleX(0.950);">F</div>
<div class="t" style="left:36.00px;top:364.33px;font:normal 9.8px/1 'Liberation Sans',sans-serif;color:#151515;transform:scaleX(0.890);">6</div>
<div class="t" style="left:602.00px;top:364.33px;font:normal 9.8px/1 'Liberation Sans',sans-serif;color:#151515;transform:scaleX(0.890);">6</div>
<div class="t" style="left:59.75px;top:364.33px;font:normal 9.8px/1 'Liberation Sans',sans-serif;color:#151515;transform:scaleX(0.821);letter-spacing:0.212px;">IVF</div>
<div class="t" style="left:87.50px;top:364.33px;font:normal 9.8px/1 'Liberation Sans',sans-serif;color:#151515;transform:scaleX(0.890);">1</div>
<div class="t" style="left:151.00px;top:364.33px;font:normal 9.8px/1 'Liberation Sans',sans-serif;color:#151515;transform:scaleX(0.821);letter-spacing:0.242px;">2Pn</div>
<div class="t" style="left:181.25px;top:364.33px;font:normal 9.8px/1 'Liberation Sans',sans-serif;color:#151515;transform:scaleX(0.854);letter-spacing:0.238px;">F2</div>
<div class="t" style="left:220.75px;top:364.33px;font:normal 9.8px/1 'Liberation Sans',sans-serif;color:#151515;transform:scaleX(0.854);letter-spacing:0.192px;">8.111</div>
<div class="t" style="left:308.25px;top:364.33px;font:normal 9.8px/1 'Liberation Sans',sans-serif;color:#151515;transform:scaleX(0.821);letter-spacing:0.213px;">Day 5</div>
<div class="t" style="left:340.75px;top:364.33px;font:normal 9.8px/1 'Liberation Sans',sans-serif;color:#151515;transform:scaleX(0.854);letter-spacing:0.216px;">2013-369</div>
<div class="t" style="left:483.25px;top:364.33px;font:normal 9.8px/1 'Liberation Sans',sans-serif;color:#151515;transform:scaleX(0.854);letter-spacing:0.227px;">_6</div>
<div class="t" style="left:570.25px;top:364.21px;font:bold 9px/1 'Liberation Sans',sans-serif;color:#151515;transform:scaleX(0.950);">F</div>
<div class="t" style="left:36.00px;top:380.97px;font:normal 9.8px/1 'Liberation Sans',sans-serif;color:#151515;transform:scaleX(0.890);">7</div>
<div class="t" style="left:602.00px;top:380.97px;font:normal 9.8px/1 'Liberation Sans',sans-serif;color:#151515;transform:scaleX(0.890);">7</div>
<div class="t" style="left:59.75px;top:380.97px;font:normal 9.8px/1 'Liberation Sans',sans-serif;color:#151515;transform:scaleX(0.821);letter-spacing:0.212px;">IVF</div>
<div class="t" style="left:87.50px;top:380.97px;font:normal 9.8px/1 'Liberation Sans',sans-serif;color:#151515;transform:scaleX(0.890);">1</div>
<div class="t" style="left:151.00px;top:380.97px;font:normal 9.8px/1 'Liberation Sans',sans-serif;color:#151515;transform:scaleX(0.821);letter-spacing:0.242px;">2Pn</div>
<div class="t" style="left:220.75px;top:380.97px;font:normal 9.8px/1 'Liberation Sans',sans-serif;color:#151515;transform:scaleX(0.854);letter-spacing:0.208px;">10.121</div>
<div class="t" style="left:36.00px;top:397.62px;font:normal 9.8px/1 'Liberation Sans',sans-serif;color:#151515;transform:scaleX(0.890);">8</div>
<div class="t" style="left:602.00px;top:397.62px;font:normal 9.8px/1 'Liberation Sans',sans-serif;color:#151515;transform:scaleX(0.890);">8</div>
<div class="t" style="left:59.75px;top:397.62px;font:normal 9.8px/1 'Liberation Sans',sans-serif;color:#151515;transform:scaleX(0.821);letter-spacing:0.212px;">IVF</div>
<div class="t" style="left:87.50px;top:397.62px;font:normal 9.8px/1 'Liberation Sans',sans-serif;color:#151515;transform:scaleX(0.890);">1</div>
<div class="t" style="left:151.00px;top:397.62px;font:normal 9.8px/1 'Liberation Sans',sans-serif;color:#151515;transform:scaleX(0.821);letter-spacing:0.242px;">2Pn</div>
<div class="t" style="left:220.75px;top:397.62px;font:normal 9.8px/1 'Liberation Sans',sans-serif;color:#151515;transform:scaleX(0.854);letter-spacing:0.204px;">8.121</div>
<div class="t" style="left:36.00px;top:414.26px;font:normal 9.8px/1 'Liberation Sans',sans-serif;color:#151515;transform:scaleX(0.890);">9</div>
<div class="t" style="left:602.00px;top:414.26px;font:normal 9.8px/1 'Liberation Sans',sans-serif;color:#151515;transform:scaleX(0.890);">9</div>
<div class="t" style="left:59.75px;top:414.26px;font:normal 9.8px/1 'Liberation Sans',sans-serif;color:#151515;transform:scaleX(0.821);letter-spacing:0.212px;">IVF</div>
<div class="t" style="left:87.50px;top:414.26px;font:normal 9.8px/1 'Liberation Sans',sans-serif;color:#151515;transform:scaleX(0.890);">1</div>
<div class="t" style="left:151.00px;top:414.26px;font:normal 9.8px/1 'Liberation Sans',sans-serif;color:#151515;transform:scaleX(0.821);letter-spacing:0.242px;">2Pn</div>
<div class="t" style="left:220.75px;top:414.26px;font:normal 9.8px/1 'Liberation Sans',sans-serif;color:#151515;transform:scaleX(0.854);letter-spacing:0.203px;">11.121</div>
<div class="t" style="left:34.50px;top:430.91px;font:normal 9.8px/1 'Liberation Sans',sans-serif;color:#151515;transform:scaleX(0.854);letter-spacing:0.227px;">10</div>
<div class="t" style="left:601.00px;top:430.91px;font:normal 9.8px/1 'Liberation Sans',sans-serif;color:#151515;transform:scaleX(0.854);letter-spacing:0.227px;">10</div>
<div class="t" style="left:59.75px;top:430.91px;font:normal 9.8px/1 'Liberation Sans',sans-serif;color:#151515;transform:scaleX(0.821);letter-spacing:0.212px;">IVF</div>
<div class="t" style="left:87.50px;top:430.91px;font:normal 9.8px/1 'Liberation Sans',sans-serif;color:#151515;transform:scaleX(0.890);">1</div>
<div class="t" style="left:151.00px;top:430.91px;font:normal 9.8px/1 'Liberation Sans',sans-serif;color:#151515;transform:scaleX(0.821);letter-spacing:0.242px;">2Pn</div>
<div class="t" style="left:220.75px;top:430.91px;font:normal 9.8px/1 'Liberation Sans',sans-serif;color:#151515;transform:scaleX(0.854);letter-spacing:0.204px;">8.121</div>
<div class="t" style="left:34.50px;top:447.55px;font:normal 9.8px/1 'Liberation Sans',sans-serif;color:#151515;transform:scaleX(0.854);letter-spacing:0.212px;">11</div>
<div class="t" style="left:601.00px;top:447.55px;font:normal 9.8px/1 'Liberation Sans',sans-serif;color:#151515;transform:scaleX(0.854);letter-spacing:0.212px;">11</div>
<div class="t" style="left:59.75px;top:447.55px;font:normal 9.8px/1 'Liberation Sans',sans-serif;color:#151515;transform:scaleX(0.821);letter-spacing:0.212px;">IVF</div>
<div class="t" style="left:87.50px;top:447.55px;font:normal 9.8px/1 'Liberation Sans',sans-serif;color:#151515;transform:scaleX(0.890);">1</div>
<div class="t" style="left:151.00px;top:447.55px;font:normal 9.8px/1 'Liberation Sans',sans-serif;color:#151515;transform:scaleX(0.821);letter-spacing:0.242px;">2Pn</div>
<div class="t" style="left:220.75px;top:447.55px;font:normal 9.8px/1 'Liberation Sans',sans-serif;color:#151515;transform:scaleX(0.854);letter-spacing:0.217px;">10.121V</div>
<div class="t" style="left:34.50px;top:464.20px;font:normal 9.8px/1 'Liberation Sans',sans-serif;color:#151515;transform:scaleX(0.854);letter-spacing:0.227px;">12</div>
<div class="t" style="left:601.00px;top:464.20px;font:normal 9.8px/1 'Liberation Sans',sans-serif;color:#151515;transform:scaleX(0.854);letter-spacing:0.227px;">12</div>
<div class="t" style="left:59.75px;top:464.20px;font:normal 9.8px/1 'Liberation Sans',sans-serif;color:#151515;transform:scaleX(0.821);letter-spacing:0.212px;">IVF</div>
<div class="t" style="left:87.50px;top:464.20px;font:normal 9.8px/1 'Liberation Sans',sans-serif;color:#151515;transform:scaleX(0.890);">1</div>
<div class="t" style="left:151.00px;top:464.20px;font:normal 9.8px/1 'Liberation Sans',sans-serif;color:#151515;transform:scaleX(0.821);letter-spacing:0.242px;">2Pn</div>
<div class="t" style="left:220.75px;top:464.20px;font:normal 9.8px/1 'Liberation Sans',sans-serif;color:#151515;transform:scaleX(0.854);letter-spacing:0.208px;">10.121</div>
<div class="t" style="left:34.50px;top:480.84px;font:normal 9.8px/1 'Liberation Sans',sans-serif;color:#151515;transform:scaleX(0.854);letter-spacing:0.227px;">13</div>
<div class="t" style="left:601.00px;top:480.84px;font:normal 9.8px/1 'Liberation Sans',sans-serif;color:#151515;transform:scaleX(0.854);letter-spacing:0.227px;">13</div>
<div class="t" style="left:59.75px;top:480.84px;font:normal 9.8px/1 'Liberation Sans',sans-serif;color:#151515;transform:scaleX(0.821);letter-spacing:0.212px;">IVF</div>
<div class="t" style="left:87.50px;top:480.84px;font:normal 9.8px/1 'Liberation Sans',sans-serif;color:#151515;transform:scaleX(0.890);">1</div>
<div class="t" style="left:151.00px;top:480.84px;font:normal 9.8px/1 'Liberation Sans',sans-serif;color:#151515;transform:scaleX(0.821);letter-spacing:0.242px;">2Pn</div>
<div class="t" style="left:220.75px;top:480.84px;font:normal 9.8px/1 'Liberation Sans',sans-serif;color:#151515;transform:scaleX(0.854);letter-spacing:0.204px;">6.121</div>
<div class="t" style="left:34.50px;top:497.49px;font:normal 9.8px/1 'Liberation Sans',sans-serif;color:#151515;transform:scaleX(0.854);letter-spacing:0.227px;">14</div>
<div class="t" style="left:601.00px;top:497.49px;font:normal 9.8px/1 'Liberation Sans',sans-serif;color:#151515;transform:scaleX(0.854);letter-spacing:0.227px;">14</div>
<div class="t" style="left:59.75px;top:497.49px;font:normal 9.8px/1 'Liberation Sans',sans-serif;color:#151515;transform:scaleX(0.821);letter-spacing:0.212px;">IVF</div>
<div class="t" style="left:87.50px;top:497.49px;font:normal 9.8px/1 'Liberation Sans',sans-serif;color:#151515;transform:scaleX(0.890);">1</div>
<div class="t" style="left:151.00px;top:497.49px;font:normal 9.8px/1 'Liberation Sans',sans-serif;color:#151515;transform:scaleX(0.821);letter-spacing:0.242px;">2Pn</div>
<div class="t" style="left:220.75px;top:497.49px;font:normal 9.8px/1 'Liberation Sans',sans-serif;color:#151515;transform:scaleX(0.854);letter-spacing:0.204px;">7.021</div>
<div class="t" style="left:34.50px;top:514.13px;font:normal 9.8px/1 'Liberation Sans',sans-serif;color:#151515;transform:scaleX(0.854);letter-spacing:0.227px;">15</div>
<div class="t" style="left:601.00px;top:514.13px;font:normal 9.8px/1 'Liberation Sans',sans-serif;color:#151515;transform:scaleX(0.854);letter-spacing:0.227px;">15</div>
<div class="t" style="left:59.75px;top:514.13px;font:normal 9.8px/1 'Liberation Sans',sans-serif;color:#151515;transform:scaleX(0.821);letter-spacing:0.212px;">IVF</div>
<div class="t" style="left:87.50px;top:514.13px;font:normal 9.8px/1 'Liberation Sans',sans-serif;color:#151515;transform:scaleX(0.890);">1</div>
<div class="t" style="left:151.00px;top:514.13px;font:normal 9.8px/1 'Liberation Sans',sans-serif;color:#151515;transform:scaleX(0.821);letter-spacing:0.242px;">2Pn</div>
<div class="t" style="left:220.75px;top:514.13px;font:normal 9.8px/1 'Liberation Sans',sans-serif;color:#151515;transform:scaleX(0.854);letter-spacing:0.204px;">8.021</div>
<div class="t" style="left:34.50px;top:530.78px;font:normal 9.8px/1 'Liberation Sans',sans-serif;color:#151515;transform:scaleX(0.854);letter-spacing:0.227px;">16</div>
<div class="t" style="left:601.00px;top:530.78px;font:normal 9.8px/1 'Liberation Sans',sans-serif;color:#151515;transform:scaleX(0.854);letter-spacing:0.227px;">16</div>
<div class="t" style="left:59.75px;top:530.78px;font:normal 9.8px/1 'Liberation Sans',sans-serif;color:#151515;transform:scaleX(0.821);letter-spacing:0.212px;">IVF</div>
<div class="t" style="left:87.50px;top:530.78px;font:normal 9.8px/1 'Liberation Sans',sans-serif;color:#151515;transform:scaleX(0.890);">1</div>
<div class="t" style="left:151.00px;top:530.78px;font:normal 9.8px/1 'Liberation Sans',sans-serif;color:#151515;transform:scaleX(0.821);letter-spacing:0.242px;">2Pn</div>
<div class="t" style="left:220.75px;top:530.78px;font:normal 9.8px/1 'Liberation Sans',sans-serif;color:#151515;transform:scaleX(0.854);letter-spacing:0.216px;">9.121V</div>
<div class="t" style="left:34.50px;top:547.42px;font:normal 9.8px/1 'Liberation Sans',sans-serif;color:#151515;transform:scaleX(0.854);letter-spacing:0.227px;">17</div>
<div class="t" style="left:601.00px;top:547.42px;font:normal 9.8px/1 'Liberation Sans',sans-serif;color:#151515;transform:scaleX(0.854);letter-spacing:0.227px;">17</div>
<div class="t" style="left:59.75px;top:547.42px;font:normal 9.8px/1 'Liberation Sans',sans-serif;color:#151515;transform:scaleX(0.821);letter-spacing:0.212px;">IVF</div>
<div class="t" style="left:87.50px;top:547.42px;font:normal 9.8px/1 'Liberation Sans',sans-serif;color:#151515;transform:scaleX(0.890);">1</div>
<div class="t" style="left:151.00px;top:547.42px;font:normal 9.8px/1 'Liberation Sans',sans-serif;color:#151515;transform:scaleX(0.821);letter-spacing:0.242px;">2Pn</div>
<div class="t" style="left:220.75px;top:547.42px;font:normal 9.8px/1 'Liberation Sans',sans-serif;color:#151515;transform:scaleX(0.854);letter-spacing:0.208px;">13.221</div>
<div class="t" style="left:34.50px;top:564.07px;font:normal 9.8px/1 'Liberation Sans',sans-serif;color:#151515;transform:scaleX(0.854);letter-spacing:0.227px;">18</div>
<div class="t" style="left:601.00px;top:564.07px;font:normal 9.8px/1 'Liberation Sans',sans-serif;color:#151515;transform:scaleX(0.854);letter-spacing:0.227px;">18</div>
<div class="t" style="left:59.75px;top:564.07px;font:normal 9.8px/1 'Liberation Sans',sans-serif;color:#151515;transform:scaleX(0.821);letter-spacing:0.212px;">IVF</div>
<div class="t" style="left:87.50px;top:564.07px;font:normal 9.8px/1 'Liberation Sans',sans-serif;color:#151515;transform:scaleX(0.890);">1</div>
<div class="t" style="left:151.00px;top:564.07px;font:normal 9.8px/1 'Liberation Sans',sans-serif;color:#151515;transform:scaleX(0.821);letter-spacing:0.242px;">3Pn</div>
<div class="t" style="left:570.25px;top:563.95px;font:bold 9px/1 'Liberation Sans',sans-serif;color:#151515;transform:scaleX(0.950);">D</div>
<div class="t" style="left:34.50px;top:580.71px;font:normal 9.8px/1 'Liberation Sans',sans-serif;color:#151515;transform:scaleX(0.854);letter-spacing:0.227px;">19</div>
<div class="t" style="left:601.00px;top:580.71px;font:normal 9.8px/1 'Liberation Sans',sans-serif;color:#151515;transform:scaleX(0.854);letter-spacing:0.227px;">19</div>
<div class="t" style="left:59.75px;top:580.71px;font:normal 9.8px/1 'Liberation Sans',sans-serif;color:#151515;transform:scaleX(0.821);letter-spacing:0.212px;">IVF</div>
<div class="t" style="left:87.50px;top:580.71px;font:normal 9.8px/1 'Liberation Sans',sans-serif;color:#151515;transform:scaleX(0.890);">1</div>
<div class="t" style="left:151.00px;top:580.71px;font:normal 9.8px/1 'Liberation Sans',sans-serif;color:#151515;transform:scaleX(0.821);letter-spacing:0.242px;">1Pn</div>
<div class="t" style="left:570.25px;top:580.59px;font:bold 9px/1 'Liberation Sans',sans-serif;color:#151515;transform:scaleX(0.950);">D</div>
<div class="t" style="left:34.50px;top:597.36px;font:normal 9.8px/1 'Liberation Sans',sans-serif;color:#151515;transform:scaleX(0.854);letter-spacing:0.227px;">20</div>
<div class="t" style="left:601.00px;top:597.36px;font:normal 9.8px/1 'Liberation Sans',sans-serif;color:#151515;transform:scaleX(0.854);letter-spacing:0.227px;">20</div>
<div class="t" style="left:59.75px;top:597.36px;font:normal 9.8px/1 'Liberation Sans',sans-serif;color:#151515;transform:scaleX(0.821);letter-spacing:0.212px;">IVF</div>
<div class="t" style="left:87.50px;top:597.36px;font:normal 9.8px/1 'Liberation Sans',sans-serif;color:#151515;transform:scaleX(0.890);">1</div>
<div class="t" style="left:151.00px;top:597.36px;font:normal 9.8px/1 'Liberation Sans',sans-serif;color:#151515;transform:scaleX(0.821);letter-spacing:0.261px;">+PB</div>
<div class="t" style="left:570.25px;top:597.24px;font:bold 9px/1 'Liberation Sans',sans-serif;color:#151515;transform:scaleX(0.950);">D</div>
<div class="a" style="left:982px;top:279px;width:11px;height:334px;background:#f8f8f2"></div>
<div class="a" style="left:982px;top:279px;width:10.5px;height:11.5px;background:linear-gradient(#d8e4fc,#b8ccf8);border:1px solid #c4d4f4;border-radius:2px"></div>
<svg class="a" style="left:983.5px;top:281px" width="8" height="7"><path d="M1 5L4 2L7 5" fill="none" stroke="#4a5a7a" stroke-width="1.6"/></svg>
<div class="a" style="left:982px;top:292.5px;width:10.5px;height:280px;background:linear-gradient(90deg,#c8d8fc,#b8ccf8);border:1px solid #c4d4f4;border-radius:2px"></div>
<div class="a" style="left:985px;top:430px;width:5px;height:1px;background:#a8bcec"></div>
<div class="a" style="left:985px;top:432px;width:5px;height:1px;background:#a8bcec"></div>
<div class="a" style="left:985px;top:434px;width:5px;height:1px;background:#a8bcec"></div>
<div class="a" style="left:982px;top:601px;width:10.5px;height:11.5px;background:linear-gradient(#d8e4fc,#b8ccf8);border:1px solid #c4d4f4;border-radius:2px"></div>
<svg class="a" style="left:983.5px;top:603px" width="8" height="7"><path d="M1 2L4 5L7 2" fill="none" stroke="#4a5a7a" stroke-width="1.6"/></svg>
<div class="a" style="left:3px;top:633px;width:1017px;height:1px;background:#b0ccf0"></div>
<div class="a" style="left:3px;top:629.5px;width:1017px;height:3.5px;background:#dde6f2"></div>
<svg class="a" style="left:301px;top:629px" width="11" height="6"><path d="M0 4.5H2.5L4 1.5H7L8.5 4.5H11" fill="none" stroke="#a8c0e8" stroke-width="1"/></svg>
<div class="a" style="left:3px;top:637px;width:1017px;height:1px;background:#a8c4ec"></div>
<div class="a" style="left:8px;top:643px;width:1008px;height:52.5px;background:#d0d0d0"></div>
<div class="t" style="left:12.20px;top:650.10px;font:normal 9.8px/1 'Liberation Sans',sans-serif;color:#151515;transform:scaleX(0.832);letter-spacing:0.207px;"># Eggs/Embryos:</div>
<div class="t" style="left:115.60px;top:650.10px;font:normal 9.8px/1 'Liberation Sans',sans-serif;color:#3636e4;transform:scaleX(0.854);letter-spacing:0.227px;">22</div>
<div class="t" style="left:12.20px;top:665.70px;font:normal 9.8px/1 'Liberation Sans',sans-serif;color:#151515;transform:scaleX(0.852);letter-spacing:0.195px;"># Embryos non-fated:</div>
<div class="t" style="left:115.60px;top:665.70px;font:normal 9.8px/1 'Liberation Sans',sans-serif;color:#3636e4;transform:scaleX(0.854);letter-spacing:0.212px;">11</div>
<div class="t" style="left:11.70px;top:681.40px;font:normal 9.8px/1 'Liberation Sans',sans-serif;color:#151515;transform:scaleX(0.817);letter-spacing:0.194px;">Hours post insem:</div>
<div class="t" style="left:116.40px;top:681.40px;font:normal 9.8px/1 'Liberation Sans',sans-serif;color:#3636e4;transform:scaleX(0.844);letter-spacing:0.194px;">> 7 days</div>
<div class="t" style="left:154.50px;top:650.10px;font:normal 9.8px/1 'Liberation Sans',sans-serif;color:#151515;transform:scaleX(0.865);letter-spacing:0.182px;">Incubator:</div>
<div class="a" style="left:253.75px;top:647px;width:43.25px;height:15px;background:#ffff00"></div>
<div class="t" style="left:258.00px;top:650.10px;font:normal 9.8px/1 'Liberation Sans',sans-serif;color:#3434d8;transform:scaleX(0.854);letter-spacing:0.197px;">4-3</div>
<div class="t" style="left:154.50px;top:665.70px;font:normal 9.8px/1 'Liberation Sans',sans-serif;color:#151515;transform:scaleX(0.867);letter-spacing:0.189px;"># Embryos transferred:</div>
<div class="t" style="left:258.00px;top:665.70px;font:normal 9.8px/1 'Liberation Sans',sans-serif;color:#3636e4;transform:scaleX(0.890);">0</div>
<div class="t" style="left:154.50px;top:681.40px;font:normal 9.8px/1 'Liberation Sans',sans-serif;color:#151515;transform:scaleX(0.836);letter-spacing:0.199px;"># Eggs/Embs frozen:</div>
<div class="t" style="left:258.00px;top:681.40px;font:normal 9.8px/1 'Liberation Sans',sans-serif;color:#3636e4;transform:scaleX(0.890);">6</div>
<div class="t" style="left:299.20px;top:649.54px;font:bold 9.4px/1 'Liberation Sans',sans-serif;color:#111;transform:scaleX(0.901);letter-spacing:0.234px;">Case</div>
<div class="t" style="left:299.20px;top:660.04px;font:bold 9.4px/1 'Liberation Sans',sans-serif;color:#111;transform:scaleX(0.949);letter-spacing:0.253px;">Comments</div>
<div class="a" style="left:353px;top:648px;width:94px;height:15px;background:linear-gradient(#f8f8f8 0,#f4f4f4 60%,#e2e2e2 62%,#e6e6e6);border:1px solid #e8e8e8;border-radius:2px"></div>
<div class="t" style="left:362.45px;top:651.70px;font:normal 9.8px/1 'Liberation Sans',sans-serif;color:#444;transform:scaleX(0.821);letter-spacing:0.230px;">Add Case Comment</div>
<div class="a" style="left:353px;top:665.5px;width:94px;height:15.0px;background:linear-gradient(#f8f8f8 0,#f4f4f4 60%,#e2e2e2 62%,#e6e6e6);border:1px solid #e8e8e8;border-radius:2px"></div>
<div class="t" style="left:357.95px;top:669.20px;font:normal 9.8px/1 'Liberation Sans',sans-serif;color:#444;transform:scaleX(0.871);letter-spacing:0.216px;">Show Larger Window</div>
<div class="a" style="left:353px;top:683px;width:94px;height:15px;background:linear-gradient(#f8f8f8 0,#f4f4f4 60%,#e2e2e2 62%,#e6e6e6);border:1px solid #e8e8e8;border-radius:2px"></div>
<div class="t" style="left:368.20px;top:686.70px;font:normal 9.8px/1 'Liberation Sans',sans-serif;color:#444;transform:scaleX(0.812);letter-spacing:0.210px;">Comment History</div>
<div class="a" style="left:455.5px;top:647px;width:253.5px;height:45.5px;background:#deecf6;border:1px solid #a8c4ec;border-radius:2px"></div>
<div class="t" style="left:484.50px;top:662.29px;font:normal 11px/1 'Liberation Serif',serif;color:#000;transform:scaleX(0.959);-webkit-text-stroke:0.15px #000">Patient Notes: Jane comes in from out-of-state.</div>
<div class="a" style="left:717.5px;top:647.5px;width:83.5px;height:16px;background:#ffff00;border:1px solid #f4f4ec"></div>
<div class="t" style="left:732.00px;top:652.20px;font:normal 9.8px/1 'Liberation Sans',sans-serif;color:#444;transform:scaleX(0.917);letter-spacing:0.218px;">Show Overview</div>
<svg class="a" style="left:718px;top:667.8px" width="10" height="10"><circle cx="5" cy="5" r="4.2" fill="#fff" stroke="#3a5a80" stroke-width="0.9"/><circle cx="5" cy="5" r="2" fill="#30a030"/></svg>
<div class="t" style="left:732.00px;top:668.20px;font:normal 9.8px/1 'Liberation Sans',sans-serif;color:#151515;transform:scaleX(0.790);letter-spacing:0.193px;">Show all</div>
<svg class="a" style="left:782px;top:667.8px" width="10" height="10"><circle cx="5" cy="5" r="4.2" fill="#fff" stroke="#3a5a80" stroke-width="0.9"/></svg>
<div class="t" style="left:796.00px;top:668.20px;font:normal 9.8px/1 'Liberation Sans',sans-serif;color:#151515;transform:scaleX(0.817);letter-spacing:0.202px;">Show applicable embryos</div>
<div class="a" style="left:916px;top:648px;width:89.79999999999995px;height:14.5px;background:linear-gradient(#f8f8f8 0,#f4f4f4 60%,#e2e2e2 62%,#e6e6e6);border:1px solid #e8e8e8;border-radius:2px"></div>
<div class="t" style="left:933.00px;top:651.90px;font:normal 9.8px/1 'Liberation Sans',sans-serif;color:#444;transform:scaleX(0.843);letter-spacing:0.190px;">Show all notes</div>
<div class="a" style="left:916px;top:665.8px;width:89.79999999999995px;height:14.200000000000045px;background:linear-gradient(#f8f8f8 0,#f4f4f4 60%,#e2e2e2 62%,#e6e6e6);border:1px solid #e8e8e8;border-radius:2px"></div>
<div class="t" style="left:925.00px;top:669.20px;font:normal 9.8px/1 'Liberation Sans',sans-serif;color:#444;transform:scaleX(0.803);letter-spacing:0.199px;">Show Patient Notes</div>
<div class="a" style="left:985px;top:695px;width:39px;height:9px;background:#000"></div>
</body></html>
